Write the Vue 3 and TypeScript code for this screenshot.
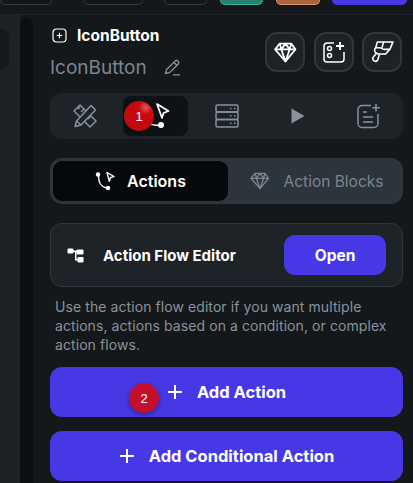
<script setup lang="ts">
const pills = [
  { w: 52, gap: 0, cls: 'ghost' },
  { w: 60, gap: 31, cls: 'ghost' },
  { w: 43, gap: 21, cls: 'ghost' },
  { w: 43, gap: 13, cls: 'teal' },
  { w: 44, gap: 13, cls: 'brown' },
  { w: 75, gap: 12, cls: 'blue' },
]
</script>

<template>
  <div class="page">
    <header class="topbar">
      <span v-for="(p, i) in pills" :key="i" class="pill" :class="p.cls" :style="{ width: p.w + 'px', marginLeft: p.gap + 'px' }"></span>
    </header>
    <div class="body">
      <div class="left">
        <div class="leftcard"></div>
      </div>
      <div class="scroll"></div>
      <main class="panel">
        <div class="head">
          <div class="titles">
            <div class="kind">
              <svg width="15" height="15" viewBox="0 0 15 15" fill="none" stroke="#fff" stroke-width="1.2"><rect x="1" y="1" width="13" height="13" rx="3.5"/><path d="M7.5 4.7v5.6M4.7 7.5h5.6"/></svg>
              <span>IconButton</span>
            </div>
            <div class="name">
              <span>IconButton</span>
              <svg width="19" height="19" viewBox="0 0 19 19" fill="none" stroke="#8a929c" stroke-width="1.3"><path d="M2.5 15.5l1-4L12.500 2.700a1.500 1.500 0 0 1 2 0l1 1a1.500 1.500 0 0 1 0 2l-9 9z"/><path d="M11 4.500l3.300 3.300M10 16.800h7"/></svg>
            </div>
          </div>
          <div class="tools">
            <button class="tool">
              <svg width="23" height="21" viewBox="0 0 22 20" fill="none" stroke="#fff" stroke-width="1.700" stroke-linejoin="round"><path d="M5.500 1.500h11l4 5.500L11 18.500 1 7z"/><path d="M1 7h20M7 7l4 11.500L15 7M5.500 1.500L7 7l4-5.500L15 7l1.500-5.500"/></svg>
            </button>
            <button class="tool">
              <svg width="22" height="22" viewBox="0 0 22 22" fill="none" stroke="#fff" stroke-width="1.500"><path d="M11 2H4a3 3 0 0 0-3 3v13a3 3 0 0 0 3 3h14a3 3 0 0 0 3-3v-7"/><circle cx="6.500" cy="7.500" r="2"/><circle cx="6.500" cy="14.500" r="2"/><path d="M17 1v8M13 5h8" stroke-width="1.800"/></svg>
            </button>
            <button class="tool">
              <svg width="23" height="24" viewBox="0 0 22 23" fill="none" stroke="#fff" stroke-width="1.500" stroke-linejoin="round"><path d="M6 2h15l-3 7H12L9 7.500H4.500z"/><path d="M12 2l-1.500 5.500M4.500 7.500c-1.500 1-1.500 4 .5 5l2 1h7l4-4.500"/><path d="M5 13l-3 3.500a2.300 2.300 0 1 0 4.500 2.500l1.500-5"/></svg>
            </button>
          </div>
        </div>

        <nav class="tabs">
          <span class="tab">
            <svg width="26" height="26" viewBox="0 0 26 26" fill="none" stroke="#8a929c" stroke-width="1.500" stroke-linejoin="round"><path d="M2 8l6-6 16 16-6 6z"/><path d="M6 6l2-2M9 9l2.500-2.500M12.500 12.500l2-2M16 16l2.500-2.500"/><path d="M19 2.500l4.500 4.500L9 22 3 23.500 4.500 18z" fill="#1f2529"/><path d="M4.500 18L9 22"/></svg>
          </span>
          <span class="tab on">
            <svg width="30" height="34" viewBox="0 0 30 34" fill="none"><path d="M16 5l11.500 7-5 2-1.500 5z" stroke="#fff" stroke-width="1.700" stroke-linejoin="round"/><path d="M8 24c2 2 6 2.500 11 2" stroke="#fff" stroke-width="1.500"/><circle cx="20" cy="26" r="3" fill="#fff"/></svg>
          </span>
          <span class="tab">
            <svg width="26" height="26" viewBox="0 0 26 26" fill="none" stroke="#8a929c" stroke-width="1.500"><rect x="2" y="2" width="22" height="7" rx="1.500"/><rect x="2" y="9" width="22" height="7.500" rx="1.500"/><rect x="2" y="16.500" width="22" height="7.500" rx="1.500"/><path d="M16 5.500h1.500M20 5.500h1.500M16 12.800h1.500M20 12.800h1.500M16 20.200h1.500M20 20.200h1.500"/></svg>
          </span>
          <span class="tab">
            <svg width="14" height="16" viewBox="0 0 14 16"><path d="M0.500 0.500L13.500 8 0.500 15.500z" fill="#8a929c"/></svg>
          </span>
          <span class="tab">
            <svg width="25" height="26" viewBox="0 0 25 26" fill="none" stroke="#8a929c" stroke-width="1.500"><path d="M15 2.500H6a4 4 0 0 0-4 4v14a4 4 0 0 0 4 4h12a4 4 0 0 0 4-4V11"/><path d="M7 9h4M7 14h10M7 19h10"/><path d="M20 1v7.500M16.300 4.800h7.500"/></svg>
          </span>
        </nav>

        <div class="segment">
          <span class="seg on">
            <svg width="20" height="20" viewBox="0 0 20 20" fill="none"><circle cx="3" cy="3.500" r="2.200" fill="#fff"/><circle cx="13" cy="17" r="2.200" fill="#fff"/><path d="M3.500 5c0 7 2 10.500 8 12" stroke="#fff" stroke-width="1.400"/><path d="M12 1.500l7 4-3.500 1.200-1.200 3.500z" stroke="#fff" stroke-width="1.400" stroke-linejoin="round"/></svg>
            <span>Actions</span>
          </span>
          <span class="seg">
            <svg width="20" height="18" viewBox="0 0 22 20" fill="none" stroke="#7d858e" stroke-width="1.500" stroke-linejoin="round"><path d="M5.500 1.500h11l4 5.500L11 18.500 1 7z"/><path d="M1 7h20M7 7l4 11.500L15 7M5.500 1.500L7 7l4-5.500L15 7l1.500-5.500"/></svg>
            <span>Action Blocks</span>
          </span>
        </div>

        <section class="flow">
          <div class="flowtitle">
            <svg width="17" height="15" viewBox="0 0 17 15" fill="#fff"><rect x="0.500" y="0.500" width="6" height="5" rx="1.200"/><rect x="9.500" y="1.500" width="7" height="5" rx="1.200"/><rect x="10.500" y="9" width="6" height="5.500" rx="1.200"/><path d="M6 2.500h4v1.500H9.500v7H11v1.500H8V4H6z"/></svg>
            <span>Action Flow Editor</span>
          </div>
          <button class="open">Open</button>
        </section>

        <p class="help">Use the action flow editor if you want multiple actions, actions based on a condition, or complex action flows.</p>

        <button class="cta">
          <svg width="16" height="16" viewBox="0 0 16 16" stroke="#fff" stroke-width="2"><path d="M8 1v14M1 8h14"/></svg>
          <span>Add Action</span>
        </button>
        <button class="cta second">
          <svg width="16" height="16" viewBox="0 0 16 16" stroke="#fff" stroke-width="2"><path d="M8 1v14M1 8h14"/></svg>
          <span>Add Conditional Action</span>
        </button>
      </main>
    </div>

    <span class="badge one">1</span>
    <span class="badge two">2</span>
  </div>
</template>

<style>
html, body { margin: 0; background: #14181b; }
</style>

<style scoped>
.page { position: relative; width: 413px; height: 483px; overflow: hidden; background: #14181b; font-family: Inter, "Liberation Sans", sans-serif; color: #fff; }
.topbar { height: 15px; box-sizing: border-box; display: flex; align-items: flex-start; border-bottom: 1px solid #1f2428; background: #14181b; }
.pill { flex: none; height: 5px; box-sizing: border-box; border-radius: 0 0 9px 9px; }
.ghost { border: 1px solid #32383e; border-top: 0; }
.teal { background: #26816f; border: 1px solid #39b39a; border-top: 0; }
.brown { background: #a8673f; border: 1px solid #e29563; border-top: 0; }
.blue { background: #4639e5; }
.body { display: flex; height: 468px; }
.left { width: 20px; flex: none; padding-top: 13px; box-sizing: border-box; background: #1c2226; }
.leftcard { width: 9px; height: 42px; background: #15191c; border-radius: 0 9px 9px 0; }
.scroll { width: 13px; flex: none; margin-top: 3px; background: #0c0e0f; border-radius: 7px 7px 0 0; }
.panel { flex: 1; min-width: 0; padding: 10px 10px 0 17px; box-sizing: border-box; border-left: 0; }
.head { display: flex; justify-content: space-between; height: 64px; }
.kind { display: flex; align-items: center; gap: 10px; font-size: 15.5px; font-weight: 700; height: 20px; margin-left: 2px; }
.name { display: flex; align-items: center; gap: 16px; color: #7d858e; font-size: 19px; height: 24px; margin-top: 10px; }
.tools { display: flex; gap: 8.5px; padding-top: 7px; padding-right: 1px; }
.tool { width: 40px; height: 40px; box-sizing: border-box; display: flex; align-items: center; justify-content: center; background: #1d2226; border: 2px solid #2f363d; border-radius: 12px; padding: 0; }
.tabs { display: flex; align-items: center; justify-content: space-between; height: 46px; margin-top: 4px; padding: 0 2px; background: #1d2327; border-radius: 12px; }
.tab { width: 65px; height: 40px; display: flex; align-items: center; justify-content: center; border-radius: 8px; }
.tab.on { background: #0f1214; }
.segment { display: flex; height: 46px; margin-top: 19px; box-sizing: border-box; padding: 2px; background: #2c343c; border: 1px solid #2f363d; border-radius: 12px; }
.seg { flex: 1; display: flex; align-items: center; justify-content: center; gap: 14px; padding-left: 5px; font-size: 15.5px; color: #7d858e; }
.seg.on { flex: 0 0 175px; gap: 12px; padding-left: 0; background: #06090b; color: #fff; font-size: 16px; font-weight: 600; border-radius: 9px; }
.flow { display: flex; align-items: center; justify-content: space-between; height: 64px; margin-top: 19px; box-sizing: border-box; padding: 0 16px; background: #1d2327; border: 1px solid #2f363d; border-radius: 12px; }
.flowtitle { display: flex; align-items: center; gap: 19px; font-size: 15px; font-weight: 700; }
.open { width: 102px; height: 40px; background: #4639e5; color: #fff; border: 0; border-radius: 11px; font: 700 15.5px Inter, "Liberation Sans", sans-serif; }
.help { margin: 10px 0 0 5px; font-size: 14px; letter-spacing: 0.08px; line-height: 19px; color: #8a929c; }
.cta { width: 353px; height: 50px; display: flex; align-items: center; justify-content: center; gap: 14px; margin-top: 13px; background: #4639e5; color: #fff; border: 0; border-radius: 12px; font: 700 16.5px Inter, "Liberation Sans", sans-serif; padding: 0; }
.cta.second { margin-top: 14px; }
.badge { position: absolute; width: 30px; height: 30px; border-radius: 50%; display: flex; align-items: center; justify-content: center; font: 13px "Liberation Sans", sans-serif; color: #fff; box-shadow: 0 2px 5px rgba(0,0,0,.35); }
.one { left: 124px; top: 101px; background: radial-gradient(circle at 72% 22%, #e0575a 0, #c8090e 22%, #bd0a10 100%); }
.two { left: 129px; top: 383px; background: #c30f2c; }
</style>
